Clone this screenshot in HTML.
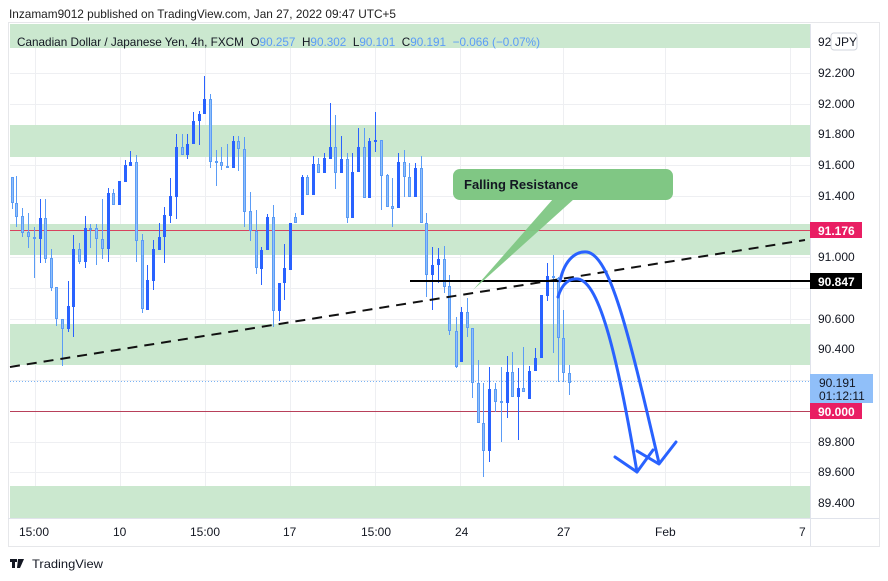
<!DOCTYPE html>
<html><head><meta charset="utf-8">
<style>
body{margin:0;width:888px;height:581px;background:#fff;font-family:"Liberation Sans",sans-serif;overflow:hidden;position:relative}
</style></head><body>
<svg id="s" width="888" height="581" style="position:absolute;left:0;top:0">
<text x="9" y="18" font-size="12" fill="#222" textLength="387" lengthAdjust="spacingAndGlyphs">Inzamam9012 published on TradingView.com, Jan 27, 2022 09:47 UTC+5</text>
<rect x="8.5" y="22.5" width="871" height="524" fill="none" stroke="#e6e7ea"/>
<g id="grid" stroke="#eeeff2" stroke-width="1"></g>
<g fill="#cbe8cf">
<rect x="10" y="24" width="800" height="24"/>
<rect x="10" y="125" width="800" height="32"/>
<rect x="10" y="224" width="800" height="31"/>
<rect x="10" y="324" width="800" height="41"/>
<rect x="10" y="486" width="800" height="32"/>
</g>
<line x1="10" y1="230.5" x2="810" y2="230.5" stroke="#d8435f" stroke-width="1"/>
<line x1="10" y1="411.5" x2="810" y2="411.5" stroke="#b8405a" stroke-width="1"/>
<line x1="10" y1="381.5" x2="810" y2="381.5" stroke="#7ab3f5" stroke-width="1" stroke-dasharray="1 2"/>
<g id="c"></g>
<line x1="10" y1="367" x2="805" y2="240" stroke="#111" stroke-width="2" stroke-dasharray="10 7"/>
<line x1="410" y1="281" x2="810" y2="281" stroke="#000" stroke-width="2"/>
<polygon points="553,199 574,199 473,290" fill="#80c784" opacity="0.95"/>
<rect x="453" y="169" width="220" height="31" rx="7" fill="#80c784"/>
<text x="464" y="189" font-size="13" font-weight="bold" fill="#131722" font-family="Liberation Sans, sans-serif">Falling Resistance</text>
<g fill="none" stroke="#2962ff" stroke-width="3" stroke-linecap="round" stroke-linejoin="round">
<path d="M560,281 C565,258 577,251 587,252 C610,256 628,330 659,463"/>
<path d="M558,297 C562,283 570,278 578,279 C600,282 618,360 637,472"/>
<path d="M615,457 L637,472 L653,450"/>
<path d="M637,451 L659,464 L676,442"/>
</g>
<line x1="810.5" y1="24" x2="810.5" y2="546" stroke="#e0e3eb"/>
<line x1="8" y1="518.5" x2="879" y2="518.5" stroke="#e0e3eb"/>
<g id="pl" font-size="12" fill="#131722" font-family="Liberation Sans, sans-serif"></g>
<rect x="810" y="222" width="52" height="16" fill="#e91e63"/>
<text x="818" y="235" font-size="12" font-weight="bold" fill="#fff">91.176</text>
<rect x="810" y="273" width="52" height="16" fill="#000"/>
<text x="818" y="286" font-size="12" font-weight="bold" fill="#fff">90.847</text>
<rect x="810" y="374" width="63" height="29" fill="#90bff9"/>
<text x="819" y="387" font-size="12" fill="#131722">90.191</text>
<text x="819" y="400" font-size="12" fill="#131722">01:12:11</text>
<rect x="810" y="403" width="52" height="16" fill="#e91e63"/>
<text x="818" y="416" font-size="12" font-weight="bold" fill="#fff">90.000</text>
<rect x="831" y="33" width="26" height="17" rx="3" fill="#fff" stroke="#d1d4dc"/>
<text x="835" y="46" font-size="12" fill="#131722">JPY</text>
<g font-size="12" fill="#131722" font-family="Liberation Sans, sans-serif">
<text x="19" y="536">15:00</text><text x="113" y="536">10</text><text x="190" y="536">15:00</text>
<text x="283" y="536">17</text><text x="361" y="536">15:00</text><text x="455" y="536">24</text>
<text x="557" y="536">27</text><text x="655" y="536">Feb</text><text x="799" y="536">7</text>
</g>
<text x="17" y="46" font-size="12" fill="#131722" textLength="523" lengthAdjust="spacingAndGlyphs" xml:space="preserve">Canadian Dollar / Japanese Yen, 4h, FXCM  O<tspan fill="#5b9cf6">90.257</tspan>  H<tspan fill="#5b9cf6">90.302</tspan>  L<tspan fill="#5b9cf6">90.101</tspan>  C<tspan fill="#5b9cf6">90.191  −0.066 (−0.07%)</tspan></text>
<g fill="#131722"><rect x="10" y="559" width="7" height="3"/><rect x="12" y="559" width="3" height="9"/><path d="M18,559 L24,559 L20,568 L17,568 Z"/></g>
<text x="32" y="568" font-size="12" fill="#131722" textLength="71" lengthAdjust="spacingAndGlyphs">TradingView</text>
</svg>
<script>
var ns="http://www.w3.org/2000/svg";
function el(p,t,a){var e=document.createElementNS(ns,t);for(var k in a)e.setAttribute(k,a[k]);p.appendChild(e);return e;}
var g=document.getElementById('grid');
[35,120,205,290,375,460,563,665,790].forEach(function(x){el(g,'line',{x1:x+.5,y1:24,x2:x+.5,y2:518});});
var pl=document.getElementById('pl');
for(var i=0;i<16;i++){var p=92.4-i*0.2;var y=Math.round(73+(92.2-p)*153.57);
el(g,'line',{x1:10,y1:y+.5,x2:810,y2:y+.5});
if(Math.abs(y-288)>4&&Math.abs(y-380)>4){var t=el(pl,'text',{x:818,y:y+4});t.textContent=p.toFixed(3);}}
var C=[[12,177,177,203,209,0],[16,176,203,217,227,0],[22,208,216,233,237,0],[28,213,232,237,248,0],[34,227,237,239,278,0],[40,199,218,239,263,1],[45,199,218,259,263,0],[51,249,258,288,291,0],[56,287,287,319,326,0],[62,319,319,329,366,0],[68,281,306,329,332,1],[73,235,249,307,337,1],[79,243,249,262,264,0],[85,216,228,262,268,1],[90,224,228,230,248,0],[96,224,228,239,265,0],[102,199,239,249,259,0],[108,188,193,249,262,1],[113,189,193,205,205,0],[119,181,181,205,205,1],[125,160,165,182,182,1],[130,151,162,166,166,1],[136,155,162,241,262,0],[142,234,240,309,313,0],[147,265,280,310,310,1],[153,240,249,281,290,1],[159,223,237,250,250,1],[164,207,215,237,263,1],[170,178,196,216,223,1],[176,134,147,197,219,1],[182,134,147,155,155,0],[187,134,144,155,159,1],[193,112,121,144,144,1],[199,111,114,121,145,1],[204,76,99,114,114,1],[210,94,99,162,168,0],[216,150,161,163,186,0],[221,147,162,166,170,0],[227,144,166,168,168,0],[233,136,141,168,168,1],[238,136,141,149,171,0],[244,137,149,212,227,0],[250,192,211,231,241,0],[256,210,231,268,274,0],[261,247,250,269,285,1],[267,214,217,250,250,1],[273,205,217,311,327,0],[279,283,283,311,321,1],[284,244,268,283,300,1],[290,223,223,270,270,1],[295,213,217,223,223,0],[302,175,177,215,215,1],[307,175,177,195,195,0],[313,156,164,195,195,1],[318,158,164,173,173,0],[324,153,158,173,173,1],[330,103,147,159,159,1],[335,115,147,173,189,0],[341,136,159,173,173,1],[347,153,159,218,223,0],[352,153,172,218,218,1],[358,128,147,172,172,1],[364,128,147,198,198,0],[369,138,141,198,198,1],[375,112,140,142,152,1],[381,140,140,176,210,0],[387,174,175,207,207,0],[392,178,206,209,227,0],[398,153,162,208,208,1],[404,150,162,177,197,0],[409,163,177,197,197,0],[415,163,168,197,197,1],[421,156,168,223,223,0],[426,213,223,275,297,0],[432,247,265,275,310,1],[438,248,259,265,283,1],[444,246,259,287,293,0],[449,275,286,331,335,0],[456,317,331,367,368,0],[461,307,312,362,362,1],[467,298,312,328,337,0],[472,328,328,383,398,0],[478,360,383,423,423,0],[483,383,423,451,477,0],[489,367,389,451,462,1],[495,383,389,402,412,0],[501,367,401,403,442,0],[507,356,372,403,418,1],[512,352,372,397,397,0],[518,368,388,397,440,1],[523,347,388,392,392,0],[529,366,371,399,399,1],[535,348,358,371,371,1],[541,295,295,358,358,1],[547,263,276,296,301,1],[553,255,276,278,353,0],[558,277,278,338,382,0],[563,310,338,373,382,0],[569,365,373,383,395,0]];
var cg=document.getElementById('c');
C.forEach(function(d){var col=d[5]?'#2962ff':'#5b9cf6';
el(cg,'line',{x1:d[0]+.5,y1:d[1],x2:d[0]+.5,y2:d[4],stroke:col,'stroke-width':1});
var h=Math.max(1,d[3]-d[2]);
if(d[5])el(cg,'rect',{x:d[0]-1,y:d[2],width:3,height:h,fill:col});
else el(cg,'rect',{x:d[0]-0.5,y:d[2]+0.5,width:2,height:Math.max(1,h-1),fill:'#90bff9',stroke:col,'stroke-width':1});});
</script>
</body></html>
